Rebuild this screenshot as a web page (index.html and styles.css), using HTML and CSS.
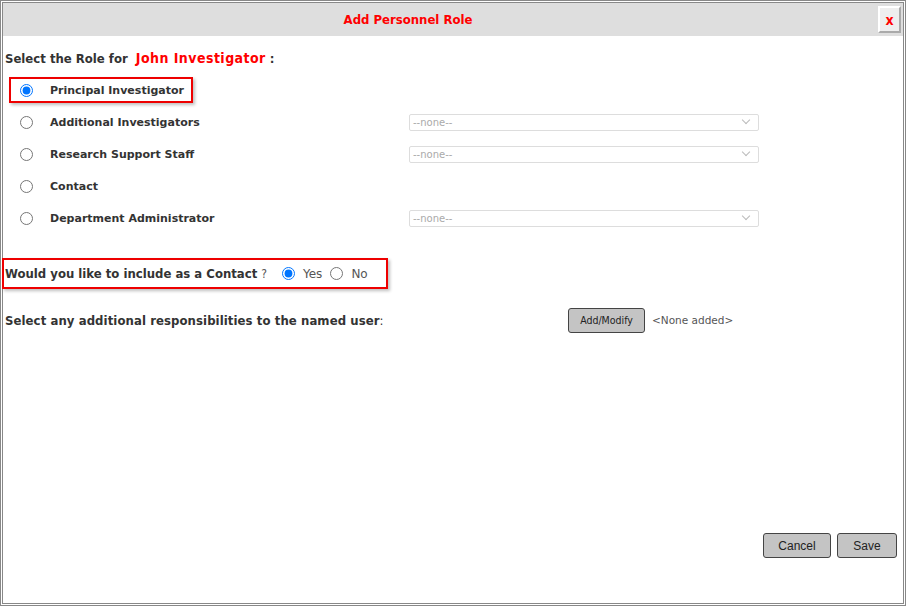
FILE: index.html
```html
<!DOCTYPE html>
<html lang="en">

<head>
  <meta charset="UTF-8">
  <title>Add Personnel Role</title>
  <link rel="stylesheet" href="styles.css">
</head>

<body>
  <div class="dialog">
    <div class="titlebar">
      <div class="title">Add Personnel Role</div>
      <button class="close">x</button>
    </div>

    <div class="content">
      <div class="role-heading">
        Select the Role for <span class="person">John Investigator</span> :
      </div>

      <!-- Role choices -->
      <div class="roles">
        <div class="role-row">
          <label class="role highlight">
            <input type="radio" name="role" checked>
            <span>Principal Investigator</span>
          </label>
        </div>
        <div class="role-row">
          <label class="role">
            <input type="radio" name="role">
            <span>Additional Investigators</span>
          </label>
          <div class="select-box"><span>--none--</span><span class="chev"></span></div>
        </div>
        <div class="role-row">
          <label class="role">
            <input type="radio" name="role">
            <span>Research Support Staff</span>
          </label>
          <div class="select-box"><span>--none--</span><span class="chev"></span></div>
        </div>
        <div class="role-row">
          <label class="role">
            <input type="radio" name="role">
            <span>Contact</span>
          </label>
        </div>
        <div class="role-row">
          <label class="role">
            <input type="radio" name="role">
            <span>Department Administrator</span>
          </label>
          <div class="select-box"><span>--none--</span><span class="chev"></span></div>
        </div>
      </div>

      <div class="contact-box">
        <b>Would you like to include as a Contact</b>
        <span class="q">?</span>
        <label class="yn"><input type="radio" name="contact" checked> Yes</label>
        <label class="yn"><input type="radio" name="contact"> No</label>
      </div>

      <div class="resp-row">
        <div class="resp-label"><b>Select any additional responsibilities to the named user</b>:</div>
        <button class="btn small">Add/Modify</button>
        <span class="none-added">&lt;None added&gt;</span>
      </div>
    </div>

    <div class="footer">
      <button class="btn">Cancel</button>
      <button class="btn save">Save</button>
    </div>
  </div>
</body>

</html>
```

FILE: styles.css
```css
body {
  margin: 0;
  font-family: "DejaVu Sans Condensed", "DejaVu Sans", sans-serif;
  color: #333;
  background: white;
}

.dialog {
  width: 906px;
  height: 606px;
  box-sizing: border-box;
  border: 3px double #888;
  display: flex;
  flex-direction: column;
}

.titlebar {
  height: 33px;
  background: #dedede;
  display: flex;
  align-items: center;
}

.title {
  flex: 1;
  text-align: center;
  padding-right: 65px;
  color: #f00;
  font-weight: bold;
  font-size: 13px;
}

.close {
  width: 23px;
  height: 27px;
  margin-right: 2px;
  padding: 0;
  background: #eee;
  border: 2px solid;
  border-color: #fff #aaa #aaa #fff;
  color: #f00;
  font-weight: bold;
  font-size: 14px;
  font-family: "DejaVu Sans Condensed", sans-serif;
}

.content {
  flex: 1;
  padding-left: 2px;
}

.role-heading {
  margin-top: 14px;
  font-size: 13px;
  font-weight: bold;
  height: 16px;
}

.person {
  color: #f00;
  font-size: 14px;
  margin-left: 4px;
  letter-spacing: 0.45px;
}

.roles {
  margin-top: 8px;
}

.role-row {
  height: 32px;
  display: flex;
  align-items: center;
}

.role {
  width: 380px;
  display: flex;
  align-items: center;
  font-family: "DejaVu Sans", sans-serif;
  font-size: 11px;
  font-weight: bold;
}

.role input {
  width: 13px;
  height: 13px;
  margin: 0 17px 0 15px;
}

.role.highlight {
  width: auto;
  margin-left: 4px;
  height: 22px;
  border: 2px solid #e00;
  box-shadow: 2px 2px 3px rgba(0, 0, 0, 0.25);
  padding-right: 7px;
}

.role.highlight input {
  margin-left: 9px;
}

.select-box {
  margin-left: 24px;
  width: 345px;
  height: 15px;
  border: 1px solid #ddd;
  border-radius: 2px;
  display: flex;
  align-items: center;
  justify-content: space-between;
  padding-left: 3px;
  font-family: "DejaVu Sans", sans-serif;
  font-size: 10px;
  color: #aaa;
}

.chev {
  width: 5px;
  height: 5px;
  border-right: 1.5px solid #bbb;
  border-bottom: 1.5px solid #bbb;
  transform: rotate(45deg);
  margin: 0 9px 4px 0;
}

.contact-box {
  margin-top: 24px;
  margin-left: -3px;
  width: 381px;
  height: 27px;
  border: 2px solid #e00;
  box-shadow: 2px 2px 3px rgba(0, 0, 0, 0.25);
  display: flex;
  align-items: center;
  padding-left: 1px;
  font-size: 13px;
}

.contact-box .q {
  font-size: 12px;
  color: #555;
  margin-left: 4px;
  margin-right: 7px;
}

.yn {
  display: flex;
  align-items: center;
  font-size: 12px;
  color: #555;
  font-family: "DejaVu Sans", sans-serif;
}

.yn input {
  width: 13px;
  height: 13px;
  margin: 0 8px 0 8px;
}

.resp-row {
  margin-top: 18px;
  display: flex;
  align-items: center;
  height: 26px;
}

.resp-label {
  width: 563px;
  font-size: 13px;
  letter-spacing: 0.08px;
}

.btn {
  background: #c4c4c4;
  border: 1px solid #444;
  border-radius: 3px;
  font-family: "Liberation Sans", Arial, sans-serif;
  font-size: 12px;
  color: #222;
  height: 25px;
  padding: 0;
}

.btn.small {
  width: 77px;
  height: 25px;
  font-family: "DejaVu Sans Condensed", sans-serif;
  font-size: 10.5px;
}

.none-added {
  margin-left: 7px;
  font-size: 10.5px;
  color: #555;
  font-family: "DejaVu Sans", sans-serif;
}

.footer {
  display: flex;
  justify-content: flex-end;
  gap: 6px;
  padding: 0 6px 45px 0;
}

.footer .btn {
  width: 68px;
}

.footer .btn.save {
  width: 60px;
}
```
